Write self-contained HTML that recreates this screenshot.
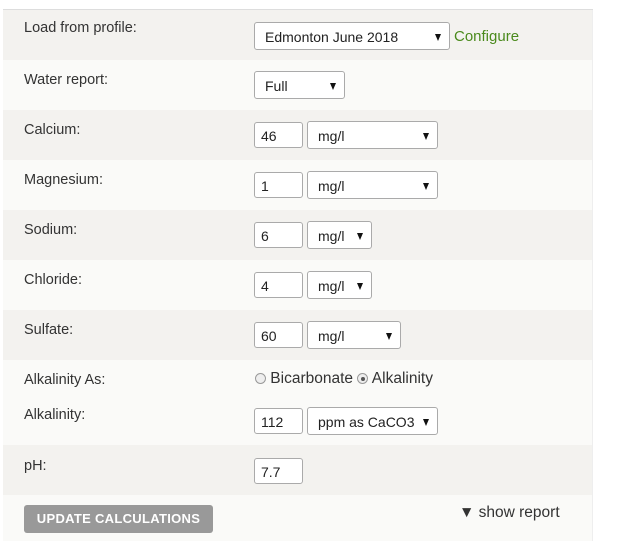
<!DOCTYPE html>
<html><head><style>
*{box-sizing:border-box;margin:0;padding:0}
body{width:620px;height:541px;background:#fff;font-family:"Liberation Sans",sans-serif;font-size:14px;color:#333;position:relative;overflow:hidden}
.row{position:absolute;left:3px;width:590px;border-right:1px solid #eee}
.g{background:#f3f2ef}.l{background:#fafaf8}
.lab{position:absolute;left:24px;font-size:14.5px;color:#333}
.in{position:absolute;left:254px;width:49px;height:26px;border:1px solid #aaa;border-radius:3px;background:#fff;padding:5px 0 0 6px;font-size:14px;color:#222}
.sel{position:absolute;height:28px;border:1px solid #aaa;border-radius:3px;background:#fff;padding:6px 0 0 10px;font-size:14px;color:#222}
.sel::after{content:"";position:absolute;right:8px;top:11px;border-left:3.5px solid transparent;border-right:3.5px solid transparent;border-top:7px solid #111}
.radio{display:inline-block;width:11px;height:11px;border:1px solid #999;border-radius:50%;background:#eee;vertical-align:-1px;position:relative}
</style></head><body>
<div style="position:absolute;left:3px;top:9px;width:590px;height:1px;background:#ddd"></div>
<div class="row g" style="top:10px;height:50px"></div>
<div class="row l" style="top:60px;height:50px"></div>
<div class="row g" style="top:110px;height:50px"></div>
<div class="row l" style="top:160px;height:50px"></div>
<div class="row g" style="top:210px;height:50px"></div>
<div class="row l" style="top:260px;height:50px"></div>
<div class="row g" style="top:310px;height:50px"></div>
<div class="row l" style="top:360px;height:85px"></div>
<div class="row g" style="top:445px;height:50px"></div>
<div class="row l" style="top:495px;height:46px"></div>

<div class="lab" style="top:20px">Load from profile:</div>
<div class="sel" style="left:254px;top:22px;width:196px">Edmonton June 2018</div>
<div style="position:absolute;left:454px;top:28px;color:#4a8a1c;font-size:15px">Configure</div>

<div class="lab" style="top:72px">Water report:</div>
<div class="sel" style="left:254px;top:71px;width:91px">Full</div>

<div class="lab" style="top:122px">Calcium:</div>
<div class="in" style="top:122px">46</div><div class="sel" style="left:307px;top:121px;width:131px">mg/l</div>

<div class="lab" style="top:172px">Magnesium:</div>
<div class="in" style="top:172px">1</div><div class="sel" style="left:307px;top:171px;width:131px">mg/l</div>

<div class="lab" style="top:222px">Sodium:</div>
<div class="in" style="top:222px">6</div><div class="sel" style="left:307px;top:221px;width:65px">mg/l</div>

<div class="lab" style="top:272px">Chloride:</div>
<div class="in" style="top:272px">4</div><div class="sel" style="left:307px;top:271px;width:65px">mg/l</div>

<div class="lab" style="top:322px">Sulfate:</div>
<div class="in" style="top:322px">60</div><div class="sel" style="left:307px;top:321px;width:94px">mg/l</div>

<div class="lab" style="top:372px">Alkalinity As:</div>
<div style="position:absolute;left:255px;top:370px;font-size:15.5px;color:#333"><span class="radio"></span> Bicarbonate <span class="radio"><span style="position:absolute;left:2.5px;top:2.5px;width:4px;height:4px;border-radius:50%;background:#555"></span></span> Alkalinity</div>

<div class="lab" style="top:407px">Alkalinity:</div>
<div class="in" style="top:408px">112</div><div class="sel" style="left:307px;top:407px;width:131px">ppm as CaCO3</div>

<div class="lab" style="top:458px">pH:</div>
<div class="in" style="top:458px">7.7</div>

<div style="position:absolute;left:24px;top:505px;width:189px;height:28px;background:#999;border-radius:3px;color:#fff;font-weight:bold;font-size:13px;text-align:center;line-height:28px;letter-spacing:0.3px">UPDATE CALCULATIONS</div>
<div style="position:absolute;left:459px;top:504px;font-size:15.5px;color:#333">▼ show report</div>
</body></html>
